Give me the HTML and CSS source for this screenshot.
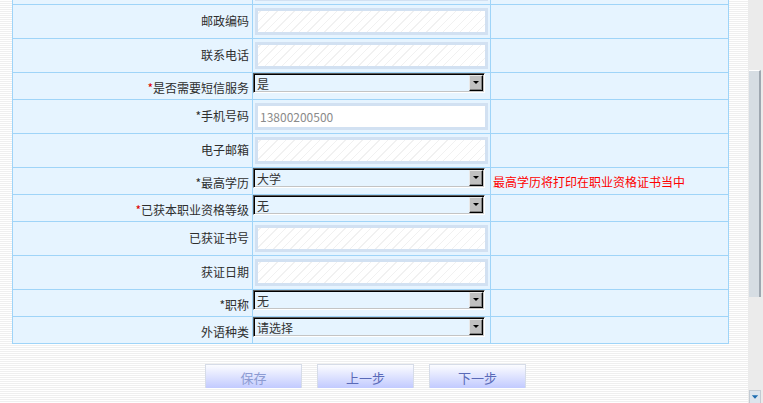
FILE: index.html
```html
<!DOCTYPE html>
<html lang="zh-CN">
<head>
  <meta charset="UTF-8" />
  <title>报名信息</title>
  <link rel="stylesheet" href="styles.css">
</head>
<body>
  <div class="screen">
    <div class="page">
      <div class="form-grid">
        <!-- row scrolled out of view -->
        <div class="cell tall label"></div>
        <div class="cell tall field"><span class="input"></span></div>
        <div class="cell tall note"></div>

        <div class="cell tall label">邮政编码</div>
        <div class="cell tall field"><span class="input"></span></div>
        <div class="cell tall note"></div>

        <div class="cell tall label">联系电话</div>
        <div class="cell tall field"><span class="input"></span></div>
        <div class="cell tall note"></div>

        <div class="cell short label"><span class="star">*</span>是否需要短信服务</div>
        <div class="cell short field pick">
          <div class="select"><span class="select-text">是</span><span class="select-btn"><i></i></span></div>
        </div>
        <div class="cell short note"></div>

        <div class="cell tall label">*手机号码</div>
        <div class="cell tall field"><span class="input filled">13800200500</span></div>
        <div class="cell tall note"></div>

        <div class="cell tall label">电子邮箱</div>
        <div class="cell tall field"><span class="input"></span></div>
        <div class="cell tall note"></div>

        <div class="cell short label">*最高学历</div>
        <div class="cell short field pick">
          <div class="select"><span class="select-text">大学</span><span class="select-btn"><i></i></span></div>
        </div>
        <div class="cell short note warn">最高学历将打印在职业资格证书当中</div>

        <div class="cell short label"><span class="star">*</span>已获本职业资格等级</div>
        <div class="cell short field pick">
          <div class="select"><span class="select-text">无</span><span class="select-btn"><i></i></span></div>
        </div>
        <div class="cell short note"></div>

        <div class="cell tall label">已获证书号</div>
        <div class="cell tall field"><span class="input"></span></div>
        <div class="cell tall note"></div>

        <div class="cell tall label">获证日期</div>
        <div class="cell tall field"><span class="input"></span></div>
        <div class="cell tall note"></div>

        <div class="cell short label">*职称</div>
        <div class="cell short field pick">
          <div class="select"><span class="select-text">无</span><span class="select-btn"><i></i></span></div>
        </div>
        <div class="cell short note"></div>

        <div class="cell short label">外语种类</div>
        <div class="cell short field pick">
          <div class="select"><span class="select-text">请选择</span><span class="select-btn"><i></i></span></div>
        </div>
        <div class="cell short note"></div>
      </div>

      <div class="actions">
        <button class="btn btn-save">保存</button>
        <button class="btn">上一步</button>
        <button class="btn">下一步</button>
      </div>
    </div>

    <div class="scrollbar">
      <div class="scroll-thumb"></div>
      <div class="scroll-down">
        <svg width="11" height="6" viewBox="0 0 11 6"><path d="M2 1h7L5.5 5z" fill="#1d6cb0"/></svg>
      </div>
    </div>
  </div>
</body>
</html>
```

FILE: styles.css
```css
body {
  margin: 0;
  font-family: "Noto Sans CJK SC", "DejaVu Sans", sans-serif;
  font-size: 12px;
  color: #333;
}
.screen {
  display: flex;
  height: 403px;
  overflow: hidden;
}
.page {
  flex: 1;
  overflow: hidden;
  background: repeating-linear-gradient(to bottom, #fff 0 1px, #efefef 1px 2px);
}

/* form table */
.form-grid {
  display: grid;
  grid-template-columns: 239px 237px 237px;
  gap: 1px;
  padding: 1px;
  width: max-content;
  background-color: #9fd4f8;
  margin: -30px 0 0 12px;
}
.cell {
  background-color: #e6f4ff;
  display: flex;
  align-items: center;
}
.tall {
  height: 33px;
}
.short {
  height: 26px;
}
.label {
  justify-content: flex-end;
  padding-right: 3px;
  color: #2e2e2e;
}
.label.tall {
  padding-bottom: 3px;
  box-sizing: border-box;
}
.label.short {
  padding-top: 2px;
  box-sizing: border-box;
}
.star {
  color: #d00;
}
.field {
  padding-left: 2px;
}
.pick {
  padding-left: 0;
  align-items: flex-start;
}
.note {
  padding-left: 2px;
}
.warn {
  color: #f00;
}

.input {
  box-sizing: border-box;
  width: 233px;
  height: 27px;
  border: 3px solid #d2e1f2;
  background: repeating-linear-gradient(-45deg, #fff 0 5px, #f1f1f1 5px 6px);
  display: flex;
  align-items: center;
  padding-left: 2px;
}
.filled {
  color: #8a8a8a;
  background: #fff;
}

.select {
  box-sizing: border-box;
  width: 232px;
  height: 20px;
  display: flex;
  align-items: center;
  background-color: #e6f4ff;
  border: 1px solid;
  border-color: #5a5a5a #fff #fff #5a5a5a;
  box-shadow: inset 1px 1px 0 #000, inset -1px -1px 0 #c4c4c4;
}
.select-text {
  flex: 1;
  padding: 1px 0 0 3px;
  line-height: 16px;
}
.select-btn {
  box-sizing: border-box;
  width: 14px;
  height: 16px;
  margin-right: 1px;
  background-color: #c0c0c0;
  border: 1px solid;
  border-color: #e8e8e8 #000 #000 #e8e8e8;
  box-shadow: inset -1px -1px 0 #808080;
  display: flex;
  align-items: center;
  justify-content: center;
}
.select-btn i {
  width: 0;
  height: 0;
  border-left: 3px solid transparent;
  border-right: 3px solid transparent;
  border-top: 3px solid #000;
  margin: 0 1px 1px 0;
}

/* buttons */
.actions {
  display: flex;
  gap: 15px;
  margin: 20px 0 0 205px;
}
.btn {
  box-sizing: border-box;
  width: 97px;
  height: 24px;
  padding: 2px 0 0;
  border: 1px solid #d6dce8;
  border-bottom: 0;
  background: linear-gradient(#fbfcff, #c2caff);
  color: #5a6ab8;
  font-family: "Noto Sans CJK SC", sans-serif;
  font-size: 13px;
}
.btn-save {
  color: #8c9bd2;
}

/* scrollbar */
.scrollbar {
  width: 15px;
  background-color: #ebebeb;
  display: flex;
  flex-direction: column;
}
.scroll-thumb {
  box-sizing: border-box;
  width: 12px;
  height: 227px;
  margin: 70px 0 0 1px;
  background-color: #d6dde3;
  border-top: 1px solid #fff;
  border-right: 2px solid #9ea7b0;
}
.scroll-down {
  box-sizing: border-box;
  width: 12px;
  height: 13px;
  margin: auto 0 0 1px;
  background-color: #dde5ed;
  border: 1px solid #c3cbd3;
  border-bottom: 0;
  display: flex;
  justify-content: center;
  padding-top: 3px;
}
```
